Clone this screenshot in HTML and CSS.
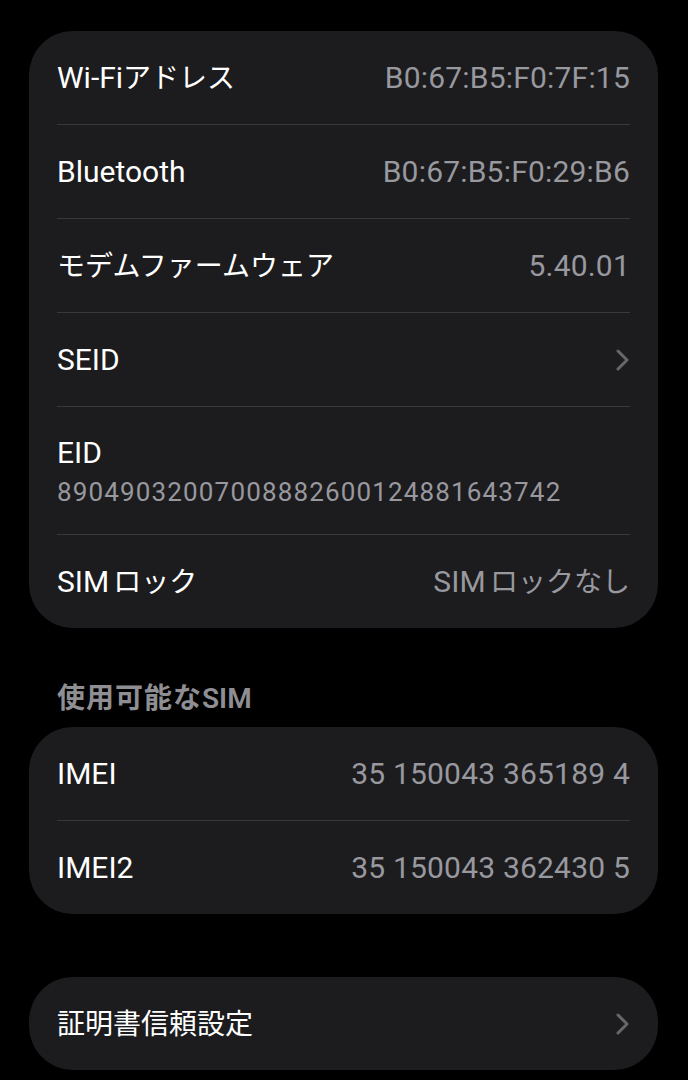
FILE: index.html
```html
<!DOCTYPE html>
<html lang="ja">
<head>
<meta charset="utf-8">
<title>情報</title>
<link rel="stylesheet" href="styles.css">
</head>
<body>
<main class="page">
  <section class="card card-first">
    <div class="row"><span class="label">Wi-Fi<span class="ja">アドレス</span></span><span class="value">B0:67:B5:F0:7F:15</span></div>
    <div class="row"><span class="label">Bluetooth</span><span class="value">B0:67:B5:F0:29:B6</span></div>
    <div class="row"><span class="label"><span class="ja">モデムファームウェア</span></span><span class="value">5.40.01</span></div>
    <div class="row"><span class="label">SEID</span><svg class="chevron" viewBox="0 0 13 22" aria-hidden="true"><path d="M2 2 L11 11 L2 20" /></svg></div>
    <div class="row row-stack"><span class="label">EID</span><span class="sub">89049032007008882600124881643742</span></div>
    <div class="row"><span class="label">SIM<span class="ja gap">ロック</span></span><span class="value">SIM<span class="ja gap">ロックなし</span></span></div>
  </section>

  <h2 class="section-title"><span class="ja">使用可能な</span>SIM</h2>
  <section class="card">
    <div class="row"><span class="label">IMEI</span><span class="value">35 150043 365189 4</span></div>
    <div class="row"><span class="label">IMEI2</span><span class="value">35 150043 362430 5</span></div>
  </section>

  <section class="card card-last">
    <div class="row"><span class="label"><span class="ja">証明書信頼設定</span></span><svg class="chevron" viewBox="0 0 13 22" aria-hidden="true"><path d="M2 2 L11 11 L2 20" /></svg></div>
  </section>
</main>
</body>
</html>
```

FILE: styles.css
```css
html, body {
  margin: 0;
  padding: 0;
  background: #000;
}

body {
  font-family: Roboto, "Noto Sans CJK JP", sans-serif;
  color: #fff;
  -webkit-font-smoothing: antialiased;
}

.page {
  padding: 31px 30px 0 29px;
  display: flex;
  flex-direction: column;
}

.card {
  background: #1c1c1e;
  border-radius: 44px;
  padding: 0 28px;
}

.card-last {
  margin-top: 63px;
}

.row {
  height: 93px;
  display: flex;
  align-items: center;
  justify-content: space-between;
  border-bottom: 1px solid #38383a;
  font-size: 30px;
  line-height: 36px;
}

.row:last-child {
  border-bottom: none;
}

.row-stack {
  height: 128px;
  flex-direction: column;
  align-items: flex-start;
  justify-content: flex-start;
  padding-top: 28px;
  box-sizing: border-box;
}

.label {
  color: #fff;
  letter-spacing: 0;
  white-space: nowrap;
}

.value {
  color: #98989f;
  letter-spacing: 0.2px;
  white-space: nowrap;
}

.ja {
  font-family: "Noto Sans CJK JP", sans-serif;
  font-size: 28px;
  line-height: 1;
  letter-spacing: 0;
}

.gap {
  margin-left: 4px;
}

.sub {
  margin-top: 6px;
  font-size: 26px;
  line-height: 30px;
  color: #98989f;
  letter-spacing: 1.15px;
}

.chevron {
  width: 13px;
  height: 22px;
  margin-right: 1px;
}

.chevron path {
  fill: none;
  stroke: #66666b;
  stroke-width: 3;
  stroke-linecap: round;
  stroke-linejoin: round;
}

.section-title {
  height: 30px;
  margin: 54px 0 15px 28px;
  font-size: 28px;
  line-height: 30px;
  font-weight: 600;
  color: #8e8e93;
  white-space: nowrap;
}

.section-title .ja {
  font-size: 28px;
  letter-spacing: 1px;
}
```
